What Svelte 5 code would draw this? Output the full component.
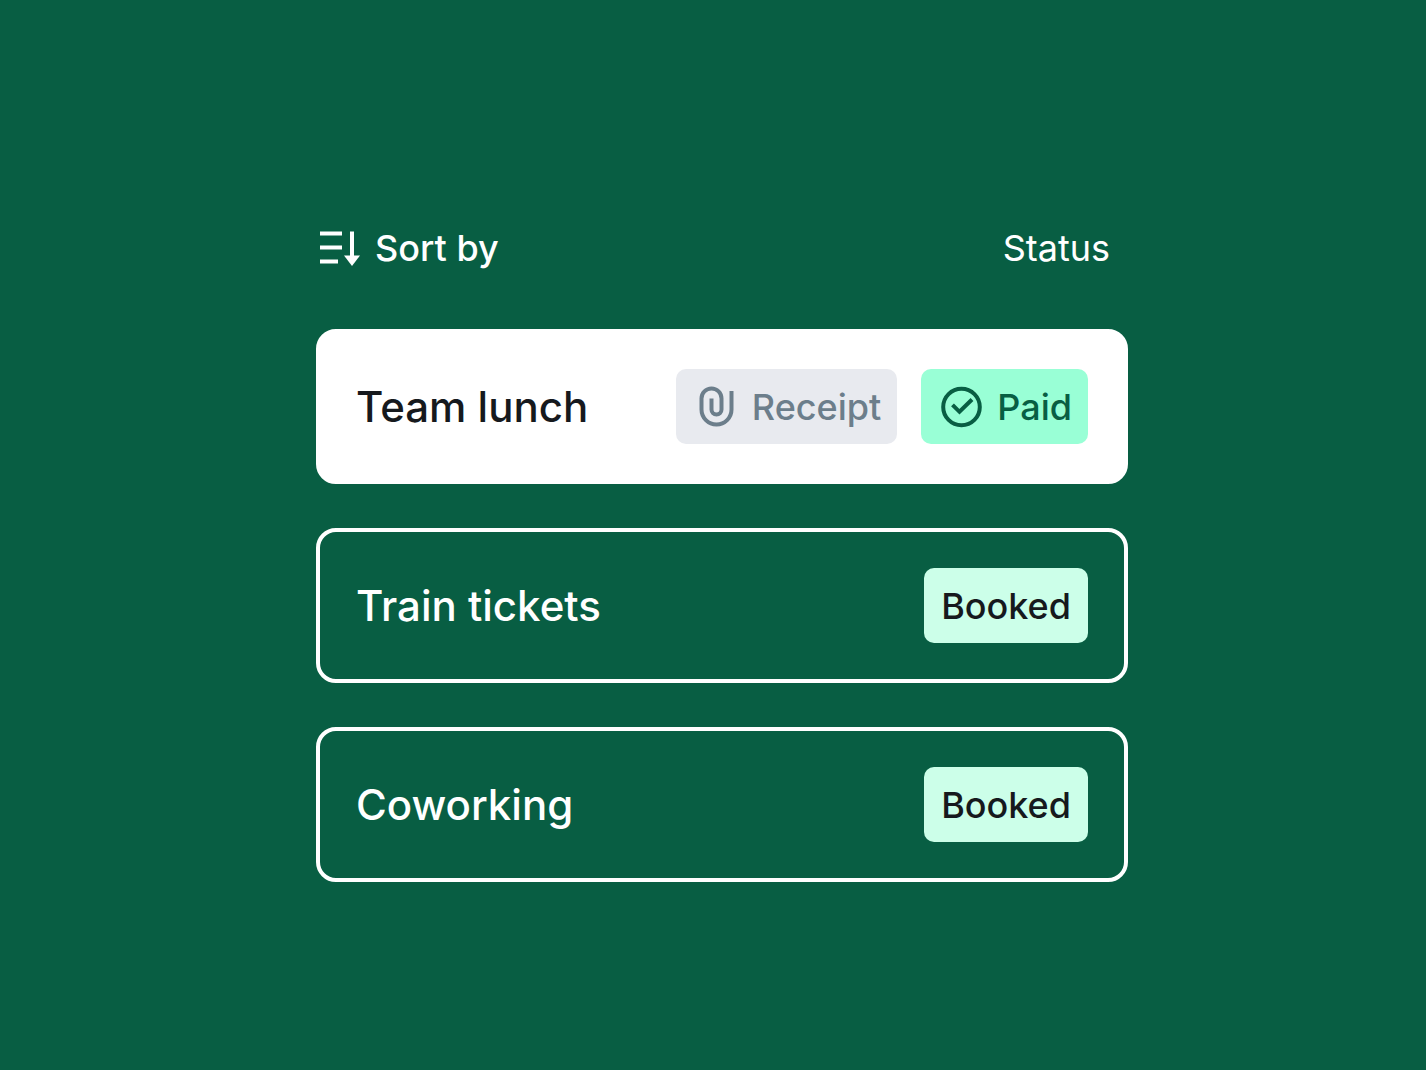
<script lang="ts">
type TagKind = 'receipt' | 'paid' | 'booked';

type Expense = {
	name: string;
	active: boolean;
	tags: TagKind[];
};

const tagLabels: Record<TagKind, string> = {
	receipt: 'Receipt',
	paid: 'Paid',
	booked: 'Booked'
};

const expenses: Expense[] = [
	{ name: 'Team lunch', active: true, tags: ['receipt', 'paid'] },
	{ name: 'Train tickets', active: false, tags: ['booked'] },
	{ name: 'Coworking', active: false, tags: ['booked'] }
];
</script>

{#snippet tag(kind: TagKind)}
	<span class="tag {kind}">
		{#if kind === 'receipt'}
			<svg class="icon" viewBox="0 0 48 48" aria-hidden="true">
				<path d="M39.5 8v18.5a15 15 0 0 1-30 0V15.5a10 10 0 0 1 20 0v11a5 5 0 0 1-10 0V15.5" />
			</svg>
		{:else if kind === 'paid'}
			<svg class="icon" viewBox="0 0 48 48" aria-hidden="true">
				<circle cx="24.5" cy="24" r="18.3" />
				<path d="M15.5 21.8l7 7L35 16.5" />
			</svg>
		{/if}
		{tagLabels[kind]}
	</span>
{/snippet}

<main class="page">
	<div class="panel">
		<div class="toolbar">
			<button class="sort" type="button">
				<svg class="icon" viewBox="0 0 48 48" aria-hidden="true">
					<path d="M4 9.5h22M4 23.5h22M4 37.5h18M36 7.5v25" />
					<path class="head" d="M28 31.5h16L36 42z" />
				</svg>
				Sort by
			</button>
			<button class="status" type="button">Status</button>
		</div>

		<ul class="list">
			{#each expenses as expense (expense.name)}
				<li class="card" class:active={expense.active}>
					<span class="name">{expense.name}</span>
					<span class="tags">
						{#each expense.tags as kind (kind)}
							{@render tag(kind)}
						{/each}
					</span>
				</li>
			{/each}
		</ul>
	</div>
</main>

<style>
:global(body) {
	margin: 0;
	background-color: #085e43;
}

.page {
	box-sizing: border-box;
	min-height: 100vh;
	padding: 224px 16px 96px 34px;
	font-family: Inter, 'Liberation Sans', sans-serif;
	font-weight: 500;
	color: #fff;
}

.panel {
	max-width: 812px;
	margin: 0 auto;
}

.toolbar {
	display: flex;
	justify-content: space-between;
	align-items: center;
	padding-right: 18px;
	margin-bottom: 57px;
}

.sort,
.status {
	display: flex;
	align-items: center;
	gap: 11px;
	padding: 0;
	border: 0;
	background: none;
	color: inherit;
	font: inherit;
	font-size: 36px;
	line-height: 48px;
	cursor: pointer;
}

.status {
	font-weight: 400;
}

.icon {
	flex: none;
	width: 48px;
	height: 48px;
	fill: none;
	stroke: currentColor;
	stroke-width: 4;
}

.head {
	fill: currentColor;
	stroke: none;
}

.list {
	display: flex;
	flex-direction: column;
	gap: 44px;
	margin: 0;
	padding: 0;
	list-style: none;
}

.card {
	display: flex;
	flex-wrap: wrap;
	justify-content: space-between;
	align-items: center;
	gap: 24px;
	padding: 36px;
	border: 4px solid #fff;
	border-radius: 20px;
}

.active {
	background-color: #fff;
	color: #16191d;
}

.name {
	font-size: 42px;
	line-height: 56px;
}

.tags {
	display: flex;
	flex-wrap: wrap;
	gap: 24px;
}

.tag {
	display: flex;
	align-items: center;
	gap: 12px;
	height: 75px;
	padding: 0 16px;
	border-radius: 10px;
	font-size: 36px;
}

.receipt {
	background-color: #e8eaef;
	color: #6c7e8b;
}

.paid {
	background-color: #99ffd6;
	color: #085e43;
}

.booked {
	padding: 0 17px;
	background-color: #ccffe9;
	color: #16191d;
}
</style>
